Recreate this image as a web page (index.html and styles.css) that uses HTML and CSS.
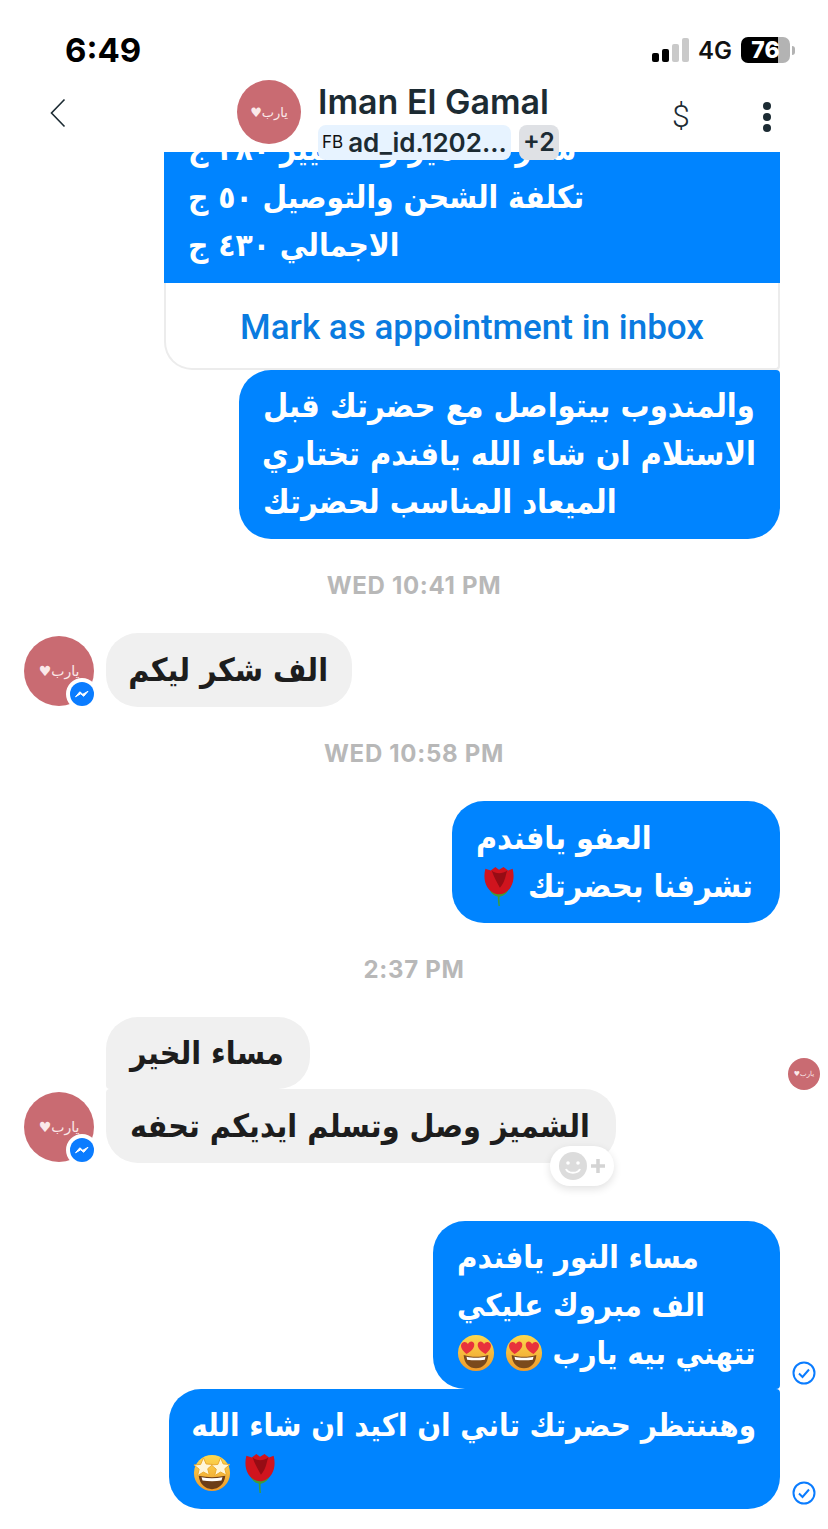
FILE: index.html
```html
<!DOCTYPE html>
<html lang="ar">
<head>
    <meta charset="UTF-8">
    <meta name="viewport" content="width=device-width, initial-scale=1.0">
    <title>Iman El Gamal</title>
    <link rel="stylesheet" href="styles.css">
</head>
<body>
    <svg class="defs" width="0" height="0" aria-hidden="true">
        <defs>
            <linearGradient id="face" x1="0" y1="0" x2="0" y2="1">
                <stop offset="0" stop-color="#fdd94f"/>
                <stop offset="1" stop-color="#ee9a2b"/>
            </linearGradient>
        </defs>
        <symbol id="heart-eyes" viewBox="0 0 40 40">
            <circle cx="20" cy="20" r="19" fill="url(#face)"/>
            <path d="M7 22c8 2.500 18 2.500 26 0-.5 9-6 14-13 14S7.500 31 7 22z" fill="#7a4a1c"/>
            <path d="M10 24c6 1.500 14 1.500 20 0l-.7 3c-6 1-12.600 1-18.600 0z" fill="#fff"/>
            <path d="M10 21C5 17 3 13 5 10c2-2.500 5-2 6.500 .5C13 7 17 7 18 10c1 3.500-2 8-8 11z" fill="#e8323c"/>
            <path d="M30 21c5-4 7-8 5-11-2-2.500-5-2-6.500 .5C27 7 23 7 22 10c-1 3.500 2 8 8 11z" fill="#e8323c"/>
        </symbol>
        <symbol id="star-struck" viewBox="0 0 40 40">
            <circle cx="20" cy="20" r="19" fill="url(#face)"/>
            <path d="M6 23c9 2 19 2 28 0-1 9-7 14-14 14S7 32 6 23z" fill="#6b3d18"/>
            <path d="M9 24.500c7 1.500 15 1.500 22 0l-1 3.500c-6 1-14 1-20 0z" fill="#fff"/>
            <path d="M11 4l2.800 6.500 7 .5-5.300 4.500 1.700 6.800L11 19l-6.200 3.800 1.700-6.800L1 11.500l7-.5z" fill="#fff6d8" stroke="#e9a92c"/>
            <path d="M29 4l2.800 6.500 7 .5-5.300 4.500 1.700 6.800L29 19l-6.200 3.800 1.700-6.800-5.300-4.500 7-.5z" fill="#fff6d8" stroke="#e9a92c"/>
        </symbol>
        <symbol id="rose" viewBox="0 0 40 44">
            <path d="M19 28c-.5 5-.5 10 .5 16h1.500c-.5-5-.5-10 0-16z" fill="#3f9b3a"/>
            <path d="M9 24c2 7 6 9 11 10 5-1 9-3 11-10-4 3-7 4-11 4s-7-1-11-4z" fill="#3f9b3a"/>
            <path d="M5 3l6 2 5-4 4 3 5-3 5 4 5-2c2 8 1 15-2 20-3 5-8 8-13 8s-10-3-13-8C4 18 3 11 5 3z" fill="#d0141e"/>
            <path d="M12 5c4 4 12 4 17 0-2 6-2 12-8 19-3-6-7-12-9-19z" fill="#960c14"/>
        </symbol>
        <symbol id="sent" viewBox="0 0 24 24">
            <circle cx="12" cy="12" r="10.500" fill="none" stroke="#0a7cff" stroke-width="2"/>
            <path d="M7 12.500l3.500 3.500L17 8.500" fill="none" stroke="#0a7cff" stroke-width="2"/>
        </symbol>
    </svg>

    <div class="page">
        <div class="status-bar">
            <span class="clock">6:49</span>
            <div class="status-right">
                <div class="signal">
                    <i class="on s1"></i><i class="on s2"></i><i class="s3"></i><i class="s4"></i>
                </div>
                <span class="network">4G</span>
                <div class="battery"><span class="battery-level">76</span></div>
                <i class="battery-nub"></i>
            </div>
        </div>

        <header class="chat-header">
            <svg class="back" width="18" height="30" viewBox="0 0 18 30">
                <path d="M15.500 1.500L2.500 15l13 13.500" fill="none" stroke="#1c2b33" stroke-width="1.600"/>
            </svg>
            <div class="avatar avatar-header" dir="rtl">يارب♥</div>
            <div class="contact">
                <div class="contact-name">Iman El Gamal</div>
                <div class="chips">
                    <span class="chip chip-ad"><span class="chip-src">FB</span>ad_id.1202...</span>
                    <span class="chip chip-more">+2</span>
                </div>
            </div>
            <span class="dollar">$</span>
            <div class="dots"><i></i><i></i><i></i></div>
        </header>

        <main class="messages">
            <div class="row-out">
                <div class="card">
                    <div class="card-body" dir="rtl">سعر الشميز والتشيير ٣٨٠ ج<br>تكلفة الشحن والتوصيل ٥٠ ج<br>الاجمالي ٤٣٠ ج</div>
                    <div class="card-action">Mark as appointment in inbox</div>
                </div>
                <div class="gutter"></div>
            </div>

            <div class="row-out">
                <div class="bubble out corner-tr w-a" dir="rtl">والمندوب بيتواصل مع حضرتك قبل<br>الاستلام ان شاء الله يافندم تختاري<br>الميعاد المناسب لحضرتك</div>
                <div class="gutter"></div>
            </div>

            <div class="time">WED 10:41 PM</div>

            <div class="row-in">
                <div class="avatar-wrap">
                    <div class="avatar avatar-msg" dir="rtl">يارب♥</div>
                    <span class="badge"><svg width="24" height="24" viewBox="0 0 24 24"><circle cx="12" cy="12" r="12" fill="#0a7cff"/><path d="M5.500 14.800l4.300-5 3 2.500 5.200-3-4.300 5-3-2.500z" fill="#fff" stroke="#fff" stroke-width="1" stroke-linejoin="round"/></svg></span>
                </div>
                <div class="group">
                    <div class="bubble in w-b" dir="rtl">الف شكر ليكم</div>
                </div>
            </div>

            <div class="time">WED 10:58 PM</div>

            <div class="row-out">
                <div class="bubble out w-c" dir="rtl">العفو يافندم<br>تشرفنا بحضرتك <svg class="emoji rose-e"><use href="#rose"/></svg></div>
                <div class="gutter"></div>
            </div>

            <div class="time">2:37 PM</div>

            <div class="row-in row-seen">
                <div class="avatar-wrap">
                    <div class="avatar avatar-msg" dir="rtl">يارب♥</div>
                    <span class="badge"><svg width="24" height="24" viewBox="0 0 24 24"><circle cx="12" cy="12" r="12" fill="#0a7cff"/><path d="M5.500 14.800l4.300-5 3 2.500 5.200-3-4.300 5-3-2.500z" fill="#fff" stroke="#fff" stroke-width="1" stroke-linejoin="round"/></svg></span>
                </div>
                <div class="group">
                    <div class="bubble in first w-d" dir="rtl">مساء الخير</div>
                    <div class="bubble in last w-e" dir="rtl">الشميز وصل وتسلم ايديكم تحفه
                        <div class="reaction">
                            <svg width="30" height="30" viewBox="0 0 30 30"><circle cx="15" cy="15" r="14" fill="#dcdcdc"/><circle cx="10" cy="12" r="1.800" fill="#fff"/><circle cx="20" cy="12" r="1.800" fill="#fff"/><path d="M8 18c2 5 12 5 14 0" fill="none" stroke="#fff" stroke-width="2"/></svg>
                            <svg width="18" height="18" viewBox="0 0 18 18"><path d="M9 2v14M2 9h14" stroke="#d4d4d4" stroke-width="3.500"/></svg>
                        </div>
                    </div>
                </div>
                <div class="avatar avatar-seen" dir="rtl">يارب♥</div>
            </div>

            <div class="row-out spaced">
                <div class="bubble out corner-br w-f" dir="rtl">مساء النور يافندم<br>الف مبروك عليكي<br>تتهني بيه يارب <svg class="emoji"><use href="#heart-eyes"/></svg> <svg class="emoji"><use href="#heart-eyes"/></svg></div>
                <div class="gutter"><svg class="sent" width="24" height="24"><use href="#sent"/></svg></div>
            </div>

            <div class="row-out">
                <div class="bubble out corner-tr w-g" dir="rtl">وهننتظر حضرتك تاني ان اكيد ان شاء الله<br><svg class="emoji rose-e"><use href="#rose"/></svg> <svg class="emoji"><use href="#star-struck"/></svg></div>
                <div class="gutter"><svg class="sent" width="24" height="24"><use href="#sent"/></svg></div>
            </div>
        </main>
    </div>
</body>
</html>
```

FILE: styles.css
```css
:root {
    --blue: #0084ff;
    --ink: #1c2b33;
    --grey-bubble: #f0f0f0;
}

body {
    margin: 0;
    background: white;
    font-family: 'Inter', 'Liberation Sans', sans-serif;
    color: var(--ink);
}

.defs {
    position: absolute;
}

.page {
    width: 828px;
    height: 1529px;
    overflow: hidden;
}

/* status bar */
.status-bar {
    height: 76px;
    padding: 24px 33px 0 65px;
    display: flex;
    justify-content: space-between;
    align-items: center;
    box-sizing: border-box;
}

.clock {
    font-size: 33px;
    font-weight: 700;
    color: black;
}

.status-right {
    display: flex;
    align-items: center;
}

.signal {
    display: flex;
    align-items: flex-end;
    gap: 3px;
    height: 24px;
    margin-right: 9px;
}

.signal i {
    width: 7px;
    background: #c9c9c9;
    border-radius: 2px;
}

.signal .on {
    background: black;
}

.s1 { height: 9px; }
.s2 { height: 13px; }
.s3 { height: 18px; }
.s4 { height: 24px; }

.network {
    font-size: 24px;
    font-weight: 600;
    color: #111;
    margin-right: 9px;
}

.battery {
    width: 49px;
    height: 26px;
    border-radius: 7px;
    background: linear-gradient(to right, black 76%, #b3b3b3 76%);
    display: flex;
    align-items: center;
    justify-content: center;
}

.battery-level {
    font-size: 23px;
    font-weight: 800;
    color: white;
}

.battery-nub {
    width: 3px;
    height: 9px;
    margin-left: 2px;
    background: #b3b3b3;
    border-radius: 0 3px 3px 0;
}

/* chat header */
.chat-header {
    height: 76px;
    display: flex;
    align-items: flex-start;
    position: relative;
    z-index: 2;
}

.back {
    margin: 22px 0 0 49px;
}

.avatar {
    border-radius: 50%;
    background: #c96b72;
    color: #fbe9e9;
    font-family: 'DejaVu Sans', sans-serif;
    display: flex;
    align-items: center;
    justify-content: center;
    flex-shrink: 0;
}

.avatar-header {
    width: 64px;
    height: 64px;
    margin: 4px 0 0 170px;
    font-size: 13px;
}

.contact {
    margin-left: 17px;
    width: 340px;
}

.contact-name {
    font-size: 34px;
    font-weight: 600;
    line-height: 44px;
    margin-top: 4px;
}

.chips {
    display: flex;
    gap: 8px;
    margin-top: 1px;
}

.chip {
    height: 35px;
    border-radius: 8px;
    display: flex;
    align-items: center;
    font-size: 26px;
    font-weight: 600;
    line-height: 35px;
}

.chip-ad {
    width: 193px;
    padding-left: 4px;
    box-sizing: border-box;
    background: #e7f3ff;
    white-space: nowrap;
}

.chip-src {
    font-size: 17px;
    font-weight: 400;
    margin-right: 5px;
    color: #111;
}

.chip-more {
    width: 40px;
    justify-content: center;
    background: #dfe1e5;
    font-size: 25px;
}

.dollar {
    font-family: 'Roboto', sans-serif;
    font-weight: 300;
    font-size: 32px;
    margin: 22px 0 0 14px;
    line-height: 36px;
}

.dots {
    display: flex;
    flex-direction: column;
    gap: 3px;
    margin: 26px 0 0 73px;
}

.dots i {
    width: 8px;
    height: 8px;
    border-radius: 50%;
    background: var(--ink);
}

/* messages */
.messages {
    height: 1377px;
    overflow: hidden;
    font-family: 'DejaVu Sans Condensed', 'DejaVu Sans', sans-serif;
    font-size: 32px;
    font-weight: 700;
}

.row-out {
    display: flex;
    justify-content: flex-end;
}

.row-out.spaced {
    margin-top: 58px;
}

.gutter {
    width: 48px;
    flex-shrink: 0;
    display: flex;
    align-items: flex-end;
}

.sent {
    margin: 0 0 4px 12px;
}

.card {
    width: 616px;
    margin-top: -39px;
}

.card-body {
    background: var(--blue);
    color: white;
    padding: 12px 24px 14px;
    font-size: 31.4px;
    line-height: 48px;
    text-align: left;
}

.card-action {
    height: 87px;
    box-sizing: border-box;
    padding-top: 4px;
    border: 2px solid #ececec;
    border-top: none;
    border-radius: 0 0 4px 28px;
    display: flex;
    align-items: center;
    justify-content: center;
    font-family: 'Roboto', sans-serif;
    font-size: 35px;
    font-weight: 500;
    color: #0a7be0;
}

.bubble {
    box-sizing: border-box;
    padding: 12px 24px;
    line-height: 48px;
    text-align: left;
    white-space: nowrap;
    border-radius: 32px;
}

.bubble.out {
    background: var(--blue);
    color: white;
}

.bubble.in {
    background: var(--grey-bubble);
    color: #1d1d1d;
    padding-top: 13px;
    padding-bottom: 13px;
    position: relative;
}

.corner-tr { border-top-right-radius: 4px; }
.corner-br { border-bottom-right-radius: 4px; }
.bubble.first { border-bottom-left-radius: 4px; padding-top: 12px; padding-bottom: 12px; }
.bubble.last { border-top-left-radius: 4px; }

.w-a { width: 541px; padding-bottom: 13px; font-size: 32.3px; }
.w-b { width: 246px; }
.w-c { width: 328px; padding-top: 13px; padding-bottom: 13px; }
.w-d { width: 204px; }
.w-e { width: 510px; }
.w-f { width: 347px; font-size: 31px; }
.w-g { width: 611px; font-size: 31px; }

.emoji {
    width: 38px;
    height: 40px;
    vertical-align: -9px;
}

.w-c .emoji {
    margin-left: 4px;
}

.time {
    margin: 34px 0 34px;
    height: 26px;
    line-height: 26px;
    text-align: center;
    font-family: 'Inter', sans-serif;
    font-size: 24px;
    font-weight: 700;
    color: #b8b8b8;
    letter-spacing: 0.7px;
}

.row-in {
    display: flex;
    align-items: flex-end;
    gap: 12px;
    padding-left: 24px;
    position: relative;
}

.avatar-wrap {
    position: relative;
    margin-bottom: 1px;
}

.avatar-msg {
    width: 70px;
    height: 70px;
    font-size: 14px;
    font-weight: 400;
}

.badge {
    position: absolute;
    right: -4px;
    bottom: -4px;
    width: 24px;
    height: 24px;
    border: 4px solid white;
    border-radius: 50%;
    background: white;
    display: flex;
}

.avatar-seen {
    position: absolute;
    top: 41px;
    right: 8px;
    width: 32px;
    height: 32px;
    font-size: 7px;
    font-weight: 400;
}

.reaction {
    position: absolute;
    right: 2px;
    bottom: -23px;
    width: 64px;
    height: 40px;
    box-sizing: border-box;
    border-radius: 20px;
    background: white;
    box-shadow: 0 3px 8px rgba(0, 0, 0, 0.12);
    display: flex;
    align-items: center;
    justify-content: center;
    gap: 1px;
    direction: ltr;
}
```
